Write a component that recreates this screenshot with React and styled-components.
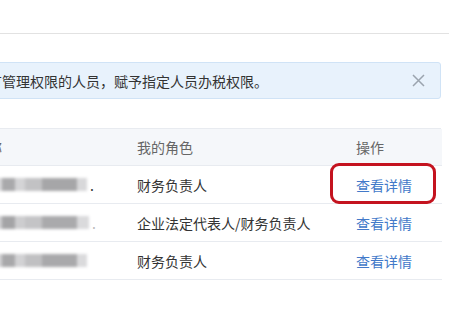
import React from "react";
import styled, { createGlobalStyle } from "styled-components";

const Global = createGlobalStyle`
  html, body { margin: 0; padding: 0; background: #fff; overflow: hidden; }
  body { font-family: "Noto Sans CJK SC", "Noto Sans", sans-serif; color: #333; }
`;

const Page = styled.div`
  width: 449px;
  height: 311px;
  overflow: hidden;
  background: #fff;
`;

const TopBar = styled.div`
  height: 33px;
  border-bottom: 1px solid #e2e2e2;
`;

const Content = styled.div`
  margin-left: -99px;
  width: 540px;
  padding-top: 28px;
  display: flex;
  flex-direction: column;
  gap: 29px;
`;

const Alert = styled.div`
  box-sizing: border-box;
  height: 37px;
  display: flex;
  align-items: center;
  justify-content: space-between;
  padding: 0 15px 0 16px;
  background: #e8f2fc;
  border: 1px solid #d0e3f6;
  border-radius: 3px;
  font-size: 14px;
  color: #333;
`;

const Close = styled.button`
  border: 0;
  background: none;
  padding: 0;
  width: 14px;
  height: 14px;
  display: flex;
  align-items: center;
  justify-content: center;
  cursor: pointer;
`;

const Table = styled.div`
  display: grid;
  grid-template-columns: 223px 219px 98px;
  border: 1px solid #e8ebf0;
  border-bottom: 0;
  font-size: 14px;
`;

const Cell = styled.div`
  position: relative;
  box-sizing: border-box;
  height: ${(p) => (p.$head ? 37 : 38)}px;
  display: flex;
  align-items: center;
  padding-left: ${(p) => (p.$first ? 16 : 12)}px;
  background: ${(p) => (p.$head ? "#f5f7fa" : "#fff")};
  color: ${(p) => (p.$head ? "#666" : "#333")};
  border-bottom: 1px solid #e8ebf0;
  white-space: nowrap;
`;

const Link = styled.a`
  color: #4279c9;
  text-decoration: none;
  cursor: pointer;
`;

const Blur = styled.div`
  display: flex;
  align-items: center;
  height: 14px;
  filter: blur(1.4px);
`;

const Block = styled.span`
  display: block;
  width: ${(p) => p.$w}px;
  height: 13px;
  background: ${(p) => p.$c};
`;

const Dot = styled.span`
  margin-left: 3px;
  color: ${(p) => p.$c};
  font-size: 14px;
`;

const Highlight = styled.div`
  position: absolute;
  left: -14px;
  top: -3px;
  width: 106px;
  height: 41px;
  box-sizing: border-box;
  border: 3px solid #c4131f;
  border-radius: 9px;
  pointer-events: none;
`;

const rows = [
  {
    role: "财务负责人",
    blocks: [
      [27, "#d6d6d8"], [30, "#c4c4c6"], [22, "#dcdcde"], [5, "#d8d8da"],
      [13, "#a9a9ab"], [10, "#d4d4d6"], [17, "#c2c2c4"], [35, "#a6a6a8"], [10, "#d8d8da"],
    ],
    dot: "#333",
    mark: true,
  },
  {
    role: "企业法定代表人/财务负责人",
    blocks: [
      [27, "#d8d8da"], [30, "#c6c6c8"], [22, "#d8d8da"], [5, "#cfcfd1"],
      [13, "#a4a4a6"], [10, "#cdcdcf"], [17, "#c4c4c6"], [35, "#aaaaac"], [12, "#dadadc"],
    ],
    dot: "#bbb",
  },
  {
    role: "财务负责人",
    blocks: [
      [27, "#d6d6d8"], [30, "#c6c6c8"], [22, "#dadadc"], [5, "#d2d2d4"],
      [13, "#a8a8aa"], [10, "#d2d2d4"], [17, "#c0c0c2"], [35, "#a9a9ab"], [10, "#dadadc"],
    ],
    dot: "transparent",
  },
];

export default function App() {
  return (
    <Page>
      <Global />
      <TopBar />
      <Content>
        <Alert>
          <span>您可以对拥有管理权限的人员，赋予指定人员办税权限。</span>
          <Close aria-label="关闭">
            <svg width="13" height="13" viewBox="0 0 13 13">
              <path d="M1 1 L12 12 M12 1 L1 12" stroke="#9ba4ae" strokeWidth="1.5" />
            </svg>
          </Close>
        </Alert>
        <Table>
          <Cell $head $first>所属企业名称</Cell>
          <Cell $head>我的角色</Cell>
          <Cell $head>操作</Cell>
          {rows.map((r, i) => (
            <React.Fragment key={i}>
              <Cell $first>
                <Blur>
                  {r.blocks.map(([w, c], j) => (
                    <Block key={j} $w={w} $c={c} />
                  ))}
                </Blur>
                <Dot $c={r.dot}>.</Dot>
              </Cell>
              <Cell>{r.role}</Cell>
              <Cell>
                <Link>查看详情</Link>
                {r.mark && <Highlight />}
              </Cell>
            </React.Fragment>
          ))}
        </Table>
      </Content>
    </Page>
  );
}
